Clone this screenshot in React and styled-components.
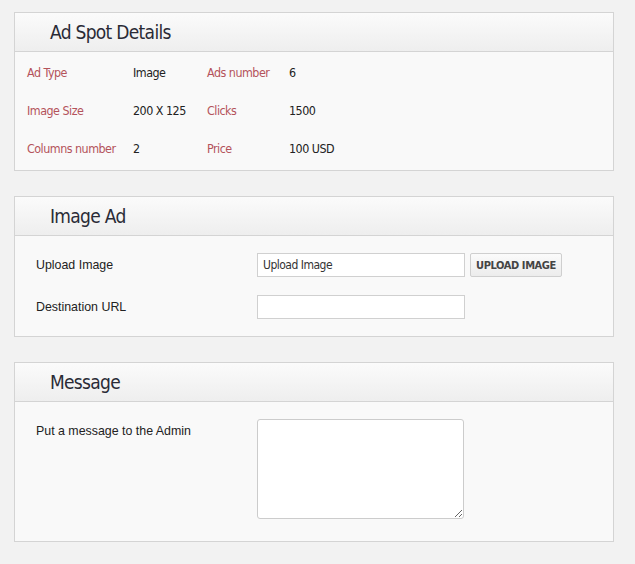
import React from 'react';
import styled, { createGlobalStyle } from 'styled-components';

const GlobalStyle = createGlobalStyle`
  body {
    margin: 0;
    background: #f2f2f2;
    font-family: "Liberation Sans", Arial, sans-serif;
  }
`;

const condensed = `"Liberation Sans Narrow", "DejaVu Sans Condensed", "Liberation Sans", sans-serif`;

const details = [
  ['Ad Type', 'Image', 'Ads number', '6'],
  ['Image Size', '200 X 125', 'Clicks', '1500'],
  ['Columns number', '2', 'Price', '100 USD'],
];

const App = () => {
  return (
    <Page>
      <GlobalStyle />
      <Panel>
        <PanelHeader>Ad Spot Details</PanelHeader>
        <DetailsGrid>
          {details.map((row) => (
            <React.Fragment key={row[0]}>
              <Key>{row[0]}</Key>
              <Value>{row[1]}</Value>
              <Key>{row[2]}</Key>
              <Value>{row[3]}</Value>
            </React.Fragment>
          ))}
        </DetailsGrid>
      </Panel>

      <Panel>
        <PanelHeader>Image Ad</PanelHeader>
        <FormBody>
          <FormRow>
            <Label>Upload Image</Label>
            <TextInput defaultValue="Upload Image" />
            <Button>Upload Image</Button>
          </FormRow>
          <FormRow>
            <Label>Destination URL</Label>
            <TextInput />
          </FormRow>
        </FormBody>
      </Panel>

      <Panel>
        <PanelHeader>Message</PanelHeader>
        <FormBody $bottom={22}>
          <FormRow $top>
            <Label>Put a message to the Admin</Label>
            <TextArea />
          </FormRow>
        </FormBody>
      </Panel>
    </Page>
  );
};

const Page = styled.div`
  padding: 12px 0 0 14px;
  width: 600px;
`;

const Panel = styled.section`
  border: 1px solid #d4d4d4;
  background: #f9f9f9;
  margin-bottom: 25px;
`;

const PanelHeader = styled.h2`
  margin: 0;
  height: 38px;
  line-height: 38px;
  padding-left: 35px;
  border-bottom: 1px solid #d4d4d4;
  background: linear-gradient(to bottom, #fbfbfb, #eeeeee);
  font-family: ${condensed};
  font-weight: normal;
  font-size: 19px;
  letter-spacing: -0.7px;
  color: #2a2b36;
`;

const DetailsGrid = styled.div`
  display: grid;
  grid-template-columns: 106px 74px 82px 1fr;
  grid-auto-rows: 38px;
  align-items: center;
  padding: 1px 0 3px 12px;
  font-family: ${condensed};
  font-size: 12.4px;
  letter-spacing: -0.5px;
`;

const Key = styled.span`
  color: #b4535b;
`;

const Value = styled.span`
  color: #222;
`;

const FormBody = styled.div`
  display: flex;
  flex-direction: column;
  gap: 18px;
  padding: 17px 0 ${(p) => p.$bottom || 17}px 21px;
`;

const FormRow = styled.div`
  display: flex;
  align-items: ${(p) => (p.$top ? 'flex-start' : 'center')};
`;

const Label = styled.label`
  width: 221px;
  flex: none;
  font-size: 12.4px;
  line-height: 24px;
  color: #222;
`;

const TextInput = styled.input`
  box-sizing: border-box;
  width: 208px;
  height: 24px;
  margin: 0;
  padding: 0 5px;
  border: 1px solid #d0d0d0;
  background: #fff;
  font-family: ${condensed};
  font-size: 12px;
  letter-spacing: -0.5px;
  color: #333;
  outline: none;
`;

const Button = styled.button`
  box-sizing: border-box;
  margin-left: 5px;
  width: 92px;
  height: 24px;
  padding: 0;
  border: 1px solid #cfcfcf;
  border-radius: 2px;
  background: linear-gradient(to bottom, #fbfbfb, #ececec);
  font-family: ${condensed};
  font-weight: bold;
  font-size: 11px;
  letter-spacing: -0.4px;
  text-transform: uppercase;
  color: #444;
`;

const TextArea = styled.textarea`
  box-sizing: border-box;
  width: 207px;
  height: 100px;
  margin: 0;
  border: 1px solid #cccccc;
  border-radius: 3px;
  background: #fff;
  outline: none;
`;

export default App;
